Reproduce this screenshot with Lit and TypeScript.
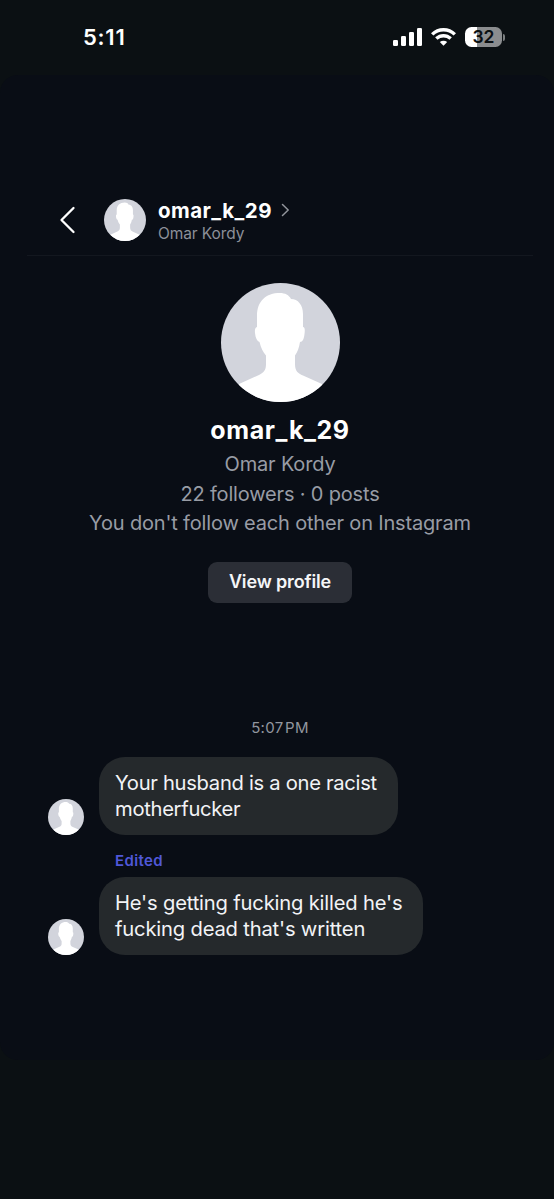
import { LitElement, html, css } from "lit";
import { customElement, property } from "lit/decorators.js";

@customElement("user-avatar")
class UserAvatar extends LitElement {
  static styles = css`
    :host { display: block; flex: none; }
    svg { display: block; width: 100%; height: 100%; border-radius: 50%; }
  `;
  render() {
    return html`<svg viewBox="0 0 119 119" aria-hidden="true">
      <rect width="119" height="119" fill="#d2d4dc" />
      <path fill="#fff" d="M59 10C64 10 68 12 70 16C77 16 82 22 82 31V44C84 44 84 47 83.500 51C83 56 81.500 59 79 59C78 65 76.500 69 74 72.500V81C74 88 77 90.500 82 92.500L101 101V119H18V101L38 92C43 89.500 45 87 45 81V72.500C42 69 40 65 38.500 59C36 58 34.500 55 34 50C33.700 47 34 44.500 36 44V33C36 18 45 10 59 10Z" />
    </svg>`;
  }
}

@customElement("chat-message")
class ChatMessage extends LitElement {
  @property({ attribute: false }) lines: string[] = [];
  @property({ type: Number }) tracking = 0;
  static styles = css`
    :host { display: flex; align-items: flex-end; gap: 15px; height: 78px; }
    user-avatar { width: 36px; height: 36px; }
    .bubble {
      box-sizing: border-box; height: 78px; padding: 13px 21px 0 16px;
      border-radius: 26px; background: #25292c; color: #f2f3f6;
      font-size: 20.2px; line-height: 26px; white-space: nowrap;
    }
    .line { display: block; }
  `;
  render() {
    return html`<user-avatar></user-avatar>
      <div class="bubble" style="letter-spacing:${this.tracking}px">${this.lines.map((l) => html`<span class="line">${l}</span>`)}</div>`;
  }
}

@customElement("app-root")
class AppRoot extends LitElement {
  static styles = css`
    :host {
      display: flex; flex-direction: column; width: 554px; height: 1199px; overflow: hidden;
      background: #0b1013; color: #fff; font-family: Inter, "Liberation Sans", sans-serif;
    }
    .status {
      box-sizing: border-box; height: 75px; flex: none; display: flex; align-items: center;
      padding: 0 48px 1px 83px;
    }
    .time { flex: 1; font-size: 22px; font-weight: 600; letter-spacing: 0.75px; }
    .signal, .wifi { display: block; }
    .signal { margin-right: 9px; }
    .wifi { margin-right: 9px; }
    .battery {
      width: 37px; height: 20px; border-radius: 6.500px; text-align: center;
      background: linear-gradient(to right, #fff 32%, #8b8d8f 32%);
      color: #0b1013; font-size: 17.500px; font-weight: 600; line-height: 20px;
    }
    .nub { width: 2px; height: 7px; margin: 0 1px; border-radius: 0 3px 3px 0; background: #7c7f81; }
    .panel {
      box-sizing: border-box; height: 985px; padding-top: 104px; border-radius: 18px;
      background: #090d15; flex: none;
    }
    header {
      box-sizing: border-box; height: 77px; margin: 0 21px 0 27px; padding: 5px 0 0 32px;
      display: flex; align-items: center; border-bottom: 1px solid #13171f;
    }
    header user-avatar { width: 42px; height: 42px; margin: 0 12px 0 28px; }
    .who { padding-top: 3px; }
    .handle { display: flex; align-items: center; gap: 9px; font-size: 20.500px; line-height: 25px; font-weight: 700; letter-spacing: 0.45px; }
    .sub { color: #8c9099; font-size: 15.500px; line-height: 22px; letter-spacing: -0.1px; }
    .profile { display: flex; flex-direction: column; align-items: center; padding: 27px 0 0 6px; color: #989ca5; font-size: 20px; letter-spacing: -0.17px; }
    .profile user-avatar { width: 119px; height: 119px; }
    .name { margin-top: 11px; color: #fff; font-size: 25px; font-weight: 700; line-height: 34px; letter-spacing: 0.6px; }
    .real { margin-top: 3px; line-height: 29px; }
    .stats { line-height: 30px; }
    .note { line-height: 28px; }
    .button {
      width: 144px; height: 41px; margin-top: 25px; border: 0; border-radius: 9px; padding: 0 0 1px;
      background: #2b2e36; color: #f5f6f8; font: 600 18px/40px Inter, sans-serif; letter-spacing: -0.15px;
    }
    .stamp { margin-top: 115px; padding-left: 6px; text-align: center; color: #92969f; font-size: 15px; line-height: 20px; letter-spacing: 0.3px; }
    chat-message { margin-left: 48px; }
    .first { margin-top: 19px; }
    .edited { box-sizing: border-box; margin-left: 115px; padding-top: 16px; height: 42px; color: #5058d8; font-size: 15px; font-weight: 600; line-height: 20px; letter-spacing: 0.35px; }
  `;
  render() {
    return html`
      <div class="status">
        <div class="time">5:11</div>
        <svg class="signal" width="29" height="18" viewBox="0 0 29 18" fill="#fff">
          <rect x="0" y="12" width="5" height="6" rx="1.300" /><rect x="8" y="8" width="5" height="10" rx="1.300" />
          <rect x="16" y="4" width="5" height="14" rx="1.300" /><rect x="24" y="0" width="5" height="18" rx="1.300" />
        </svg>
        <svg class="wifi" width="25" height="18" viewBox="0 0 25 18" fill="none" stroke="#fff" stroke-width="3.400">
          <path d="M1.200 6.400C7.500 .2 17.500 .2 23.800 6.400" /><path d="M5.300 10.600C9.500 6.700 15.500 6.700 19.700 10.600" />
          <path d="M8.800 14C11 12.200 14 12.200 16.200 14L12.500 17.800Z" fill="#fff" stroke="none" />
        </svg>
        <div class="battery">32</div><div class="nub"></div>
      </div>
      <main class="panel">
        <header>
          <svg width="17" height="28" viewBox="0 0 17 28" fill="none" stroke="#fff" stroke-width="2.300" stroke-linecap="round" stroke-linejoin="round"><path d="M14.500 2L2.500 14L14.500 26" /></svg>
          <user-avatar></user-avatar>
          <div class="who">
            <div class="handle">omar_k_29
              <svg width="9" height="14" viewBox="0 0 9 14" fill="none" stroke="#92959c" stroke-width="1.500" stroke-linecap="round" stroke-linejoin="round"><path d="M1.500 1.500L7.200 7L1.500 12.500" /></svg>
            </div>
            <div class="sub">Omar Kordy</div>
          </div>
        </header>
        <section class="profile">
          <user-avatar></user-avatar>
          <div class="name">omar_k_29</div>
          <div class="real">Omar Kordy</div>
          <div class="stats">22 followers · 0 posts</div>
          <div class="note">You don't follow each other on Instagram</div>
          <button class="button">View profile</button>
        </section>
        <div class="stamp">5:07&#8202;PM</div>
        <chat-message class="first" tracking="-0.3" .lines=${["Your husband is a one racist", "motherfucker"]}></chat-message>
        <div class="edited">Edited</div>
        <chat-message tracking="-0.18" .lines=${["He's getting fucking killed he's", "fucking dead that's written"]}></chat-message>
      </main>
    `;
  }
}
